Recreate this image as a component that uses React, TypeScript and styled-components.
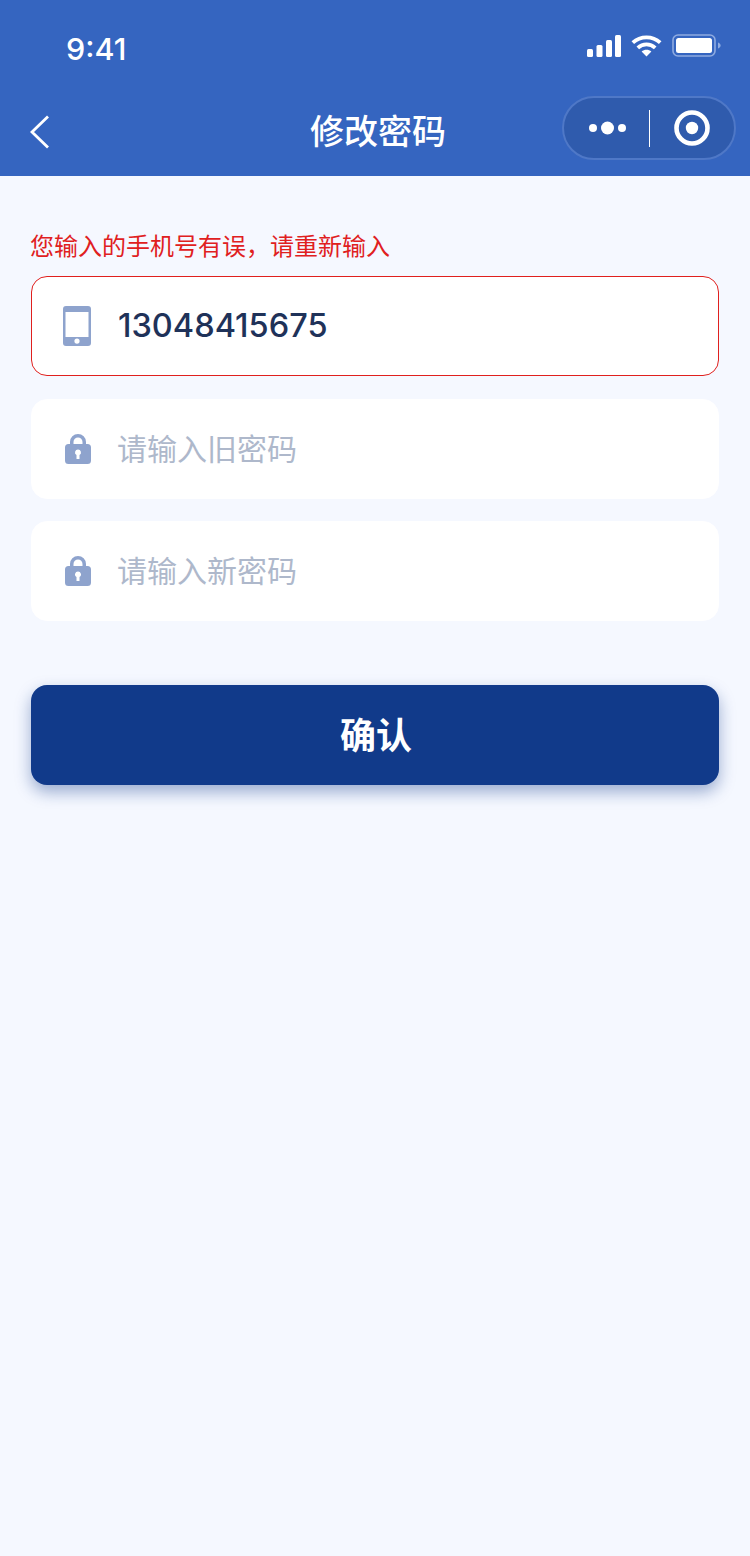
import React from "react";
import styled, { createGlobalStyle } from "styled-components";

const CJK = `"Noto Sans CJK SC", "Noto Sans", sans-serif`;

const GlobalStyle = createGlobalStyle`
  html, body {
    margin: 0;
    padding: 0;
    background: #f5f8ff;
  }
  * {
    box-sizing: border-box;
  }
`;

const Page = styled.div`
  width: 750px;
  height: 1556px;
  overflow: hidden;
  background: #f5f8ff;
  font-family: ${CJK};
`;

const Header = styled.header`
  height: 176px;
  background: #3565c0;
  color: #fff;
`;

const StatusBar = styled.div`
  height: 88px;
  padding: 27px 29px 0 66px;
  display: flex;
  justify-content: space-between;
  align-items: flex-start;
`;

const Clock = styled.div`
  font-family: Inter, sans-serif;
  font-size: 30.5px;
  font-weight: 500;
  line-height: 44px;
`;

const StatusIcons = styled.div`
  display: flex;
  align-items: center;
  gap: 10px;
  padding-top: 7px;
`;

const NavBar = styled.div`
  height: 88px;
  display: grid;
  grid-template-columns: 280px auto 1fr;
  align-items: start;
  padding: 0 14px 0 30px;
`;

const BackButton = styled.div`
  display: flex;
  align-items: center;
  height: 34px;
  margin-top: 27px;
`;

const Title = styled.h1`
  margin: 0;
  font-size: 34px;
  font-weight: 500;
  line-height: 83px;
`;

const Capsule = styled.div`
  justify-self: end;
  width: 174px;
  height: 64px;
  margin-top: 8px;
  border-radius: 32px;
  border: 2px solid #4f78c7;
  background: #2f5bad;
  display: flex;
  align-items: center;
`;

const MoreSide = styled.div`
  flex: 0 0 85px;
  height: 100%;
  padding-left: 3px;
  display: flex;
  align-items: center;
  justify-content: center;
`;

const RecordSide = styled.div`
  flex: 1;
  height: 100%;
  display: flex;
  align-items: center;
  justify-content: center;
`;

const CapsuleDivider = styled.div`
  width: 1px;
  height: 37px;
  background: #fff;
`;

const Form = styled.main`
  padding: 53px 31px 0;
  display: flex;
  flex-direction: column;
`;

const ErrorText = styled.div`
  font-size: 24px;
  line-height: 32px;
  color: #e0201e;
  margin: 0 0 15px -1px;
`;

const Field = styled.div<{ $error?: boolean }>`
  height: 100px;
  border-radius: 16px;
  background: #fff;
  border: 1px solid ${(p) => (p.$error ? "#e0201e" : "#fff")};
  margin-bottom: ${(p) => (p.$error ? 23 : 22)}px;
  display: flex;
  align-items: center;
  padding-left: 31px;
`;

const FieldIcon = styled.div`
  width: 55px;
  flex-shrink: 0;
  display: flex;
`;

const PhoneValue = styled.div`
  font-family: Inter, sans-serif;
  font-size: 32.5px;
  font-weight: 500;
  color: #1f3259;
  padding-bottom: 2px;
`;

const Placeholder = styled.div`
  font-size: 30px;
  color: #aeb8cb;
  margin-left: -1px;
  padding-bottom: 5px;
`;

const ConfirmButton = styled.button`
  margin-top: 42px;
  height: 100px;
  border: 0;
  padding: 0 0 4px 2px;
  border-radius: 16px;
  background: #113a8a;
  color: #fff;
  font-family: ${CJK};
  font-size: 36px;
  font-weight: 700;
  box-shadow: 0 7px 16px rgba(17, 58, 138, 0.4);
`;

const LockSvg = styled.svg`
  margin-left: 2px;
`;

const PhoneIcon = () => (
  <svg width="28" height="40" viewBox="0 0 28 40">
    <path
      fillRule="evenodd"
      fill="#8ea3cd"
      d="M3 0h22a3 3 0 0 1 3 3v34a3 3 0 0 1-3 3H3a3 3 0 0 1-3-3V3a3 3 0 0 1 3-3zM2.5 6v25h23V6zM14 32.5a2.6 2.6 0 1 0 0 5.2a2.6 2.6 0 0 0 0-5.2z"
    />
  </svg>
);

const LockIcon = () => (
  <LockSvg width="26" height="30" viewBox="0 0 26 30">
    <path
      fillRule="evenodd"
      fill="#8ea3cd"
      d="M5 10V8a8 8 0 0 1 16 0v2h1.5A3.5 3.5 0 0 1 26 13.5v13a3.5 3.5 0 0 1-3.5 3.5h-19A3.5 3.5 0 0 1 0 26.5v-13A3.5 3.5 0 0 1 3.5 10zM8.5 10h9V8a4.5 4.5 0 0 0-9 0zM13 15.5a3 3 0 0 0-1.5 5.6V25h3v-3.9a3 3 0 0 0-1.5-5.6z"
    />
  </LockSvg>
);

const SignalIcon = () => (
  <svg width="34" height="22" viewBox="0 0 34 22" fill="#fff">
    <rect x="0" y="14" width="6" height="8" rx="1.5" />
    <rect x="9.5" y="10" width="6" height="12" rx="1.5" />
    <rect x="19" y="5" width="6" height="17" rx="1.5" />
    <rect x="28" y="0" width="6" height="22" rx="1.5" />
  </svg>
);

const WifiIcon = () => (
  <svg width="31" height="22" viewBox="0 0 31 22" fill="none" stroke="#fff" strokeWidth="3.8">
    <path d="M1.8 7.6C9.5 .6 21.5 .6 29.2 7.6" />
    <path d="M6.8 12.8C11.8 8.2 19.2 8.2 24.2 12.8" />
    <path d="M15.5 21.5L10.6 16.5C13.4 14.2 17.6 14.2 20.4 16.5z" fill="#fff" stroke="none" />
  </svg>
);

const BatteryIcon = () => (
  <svg width="49" height="23" viewBox="0 0 49 23">
    <rect x="1" y="1" width="42" height="21" rx="5" fill="none" stroke="#8fabe0" strokeWidth="1.6" />
    <rect x="4" y="4" width="36" height="15" rx="2.5" fill="#fff" />
    <path d="M46 8.5c1.6.5 2.6 1.6 2.6 3s-1 2.5-2.6 3z" fill="#8fabe0" />
  </svg>
);

const BackIcon = () => (
  <svg width="20" height="34" viewBox="0 0 20 34" fill="none" stroke="#fff" strokeWidth="2.8">
    <path d="M18 1.5L2 17l16 15.5" />
  </svg>
);

const MoreIcon = () => (
  <svg width="38" height="14" viewBox="0 0 38 14" fill="#fff">
    <circle cx="4" cy="7" r="4" />
    <circle cx="18.5" cy="7" r="6.5" />
    <circle cx="33" cy="7" r="4" />
  </svg>
);

const RecordIcon = () => (
  <svg width="36" height="36" viewBox="0 0 36 36">
    <circle cx="18" cy="18" r="15.5" fill="none" stroke="#fff" strokeWidth="4.6" />
    <circle cx="18" cy="18" r="6.2" fill="#fff" />
  </svg>
);

export default function App() {
  return (
    <Page>
      <GlobalStyle />
      <Header>
        <StatusBar>
          <Clock>9:41</Clock>
          <StatusIcons>
            <SignalIcon />
            <WifiIcon />
            <BatteryIcon />
          </StatusIcons>
        </StatusBar>
        <NavBar>
          <BackButton>
            <BackIcon />
          </BackButton>
          <Title>修改密码</Title>
          <Capsule>
            <MoreSide>
              <MoreIcon />
            </MoreSide>
            <CapsuleDivider />
            <RecordSide>
              <RecordIcon />
            </RecordSide>
          </Capsule>
        </NavBar>
      </Header>
      <Form>
        <ErrorText>您输入的手机号有误，请重新输入</ErrorText>
        <Field $error>
          <FieldIcon>
            <PhoneIcon />
          </FieldIcon>
          <PhoneValue>13048415675</PhoneValue>
        </Field>
        <Field>
          <FieldIcon>
            <LockIcon />
          </FieldIcon>
          <Placeholder>请输入旧密码</Placeholder>
        </Field>
        <Field>
          <FieldIcon>
            <LockIcon />
          </FieldIcon>
          <Placeholder>请输入新密码</Placeholder>
        </Field>
        <ConfirmButton>确认</ConfirmButton>
      </Form>
    </Page>
  );
}
